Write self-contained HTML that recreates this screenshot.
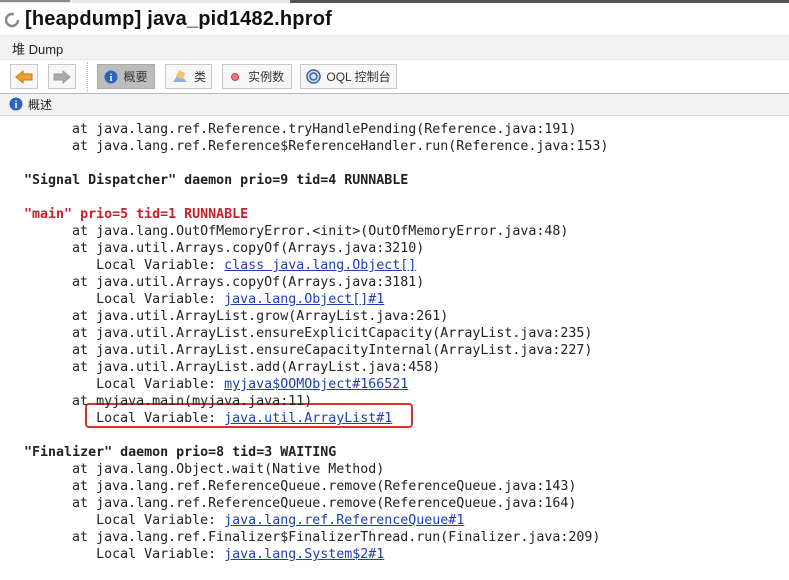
<!DOCTYPE html>
<html><head><meta charset="utf-8"><style>
*{margin:0;padding:0;box-sizing:border-box}
body{width:789px;height:580px;overflow:hidden;background:#fff;position:relative;font-family:"Liberation Sans","Noto Sans CJK SC",sans-serif;color:#222}
.abs{position:absolute}
.btn{position:absolute;top:64px;height:25px;border:1px solid #c8c8c8;background:#f7f7f7;font-size:12px;display:flex;align-items:center;justify-content:center;gap:5px;color:#333}
pre{position:absolute;left:0;top:121px;font-family:"DejaVu Sans Mono","Liberation Mono",monospace;font-size:13.3px;line-height:17px;color:#222}
a{color:#1f3fae;text-decoration:underline}
.r{color:#c8202a;font-weight:bold}
b{font-weight:bold}
</style></head><body>
<div class="abs" style="left:0;top:0;width:789px;height:3px;background:#e8e8e8"></div>
<div class="abs" style="left:290px;top:0;width:499px;height:3px;background:#555"></div>
<div class="abs" style="left:0;top:0;width:70px;height:2px;background:#888"></div>
<svg class="abs" style="left:4px;top:12px" width="16" height="16"><circle cx="8" cy="8" r="6" fill="none" stroke="#888" stroke-width="2.4" stroke-dasharray="30 8"/></svg>
<div class="abs" style="left:25px;top:8px;font-size:20px;font-weight:bold;color:#111;letter-spacing:0.2px">[heapdump] java_pid1482.hprof</div>
<div class="abs" style="left:0;top:35px;width:789px;height:25px;background:#f3f3f3;border-top:1px solid #e6e6e6;border-bottom:1px solid #e6e6e6"></div>
<div class="abs" style="left:12px;top:39px;font-size:13px;color:#222">堆 Dump</div>
<div class="btn" style="left:10px;width:28px"><svg width="18" height="14"><path d="M1 7 L8 1 V4 H17 V10 H8 V13 Z" fill="#f0a030" stroke="#c77a10"/></svg></div>
<div class="btn" style="left:48px;width:28px"><svg width="18" height="14"><path d="M17 7 L10 1 V4 H1 V10 H10 V13 Z" fill="#aaa" stroke="#999"/></svg></div>
<div class="abs" style="left:87px;top:62px;height:30px;border-left:1px dotted #bbb"></div>
<div class="btn" style="left:97px;width:58px;background:#bdbdbd;border-color:#aaa"><svg width="14" height="14"><circle cx="7" cy="7" r="6.5" fill="#2d63b8"/><text x="7" y="11" font-size="10" font-weight="bold" fill="#fff" text-anchor="middle" font-family="Liberation Serif">i</text></svg>概要</div>
<div class="btn" style="left:165px;width:47px"><svg width="18" height="14"><path d="M2 12 L8 3 L16 12 Z" fill="#8ab4e0"/><rect x="6" y="1" width="7" height="7" fill="#f5c16a" transform="rotate(30 9 5)"/></svg>类</div>
<div class="btn" style="left:222px;width:70px"><svg width="10" height="10"><circle cx="5" cy="5" r="3.5" fill="#e77" stroke="#c44"/></svg>&nbsp;实例数</div>
<div class="btn" style="left:300px;width:97px"><svg width="15" height="15"><circle cx="7.5" cy="7.5" r="6.5" fill="#cfe0f5" stroke="#3a5f95" stroke-width="1.5"/><circle cx="7.5" cy="7.5" r="3.5" fill="none" stroke="#3a5f95" stroke-width="1.5"/></svg>OQL 控制台</div>
<div class="abs" style="left:0;top:93px;width:789px;height:23px;background:#f2f2f2;border-top:1px solid #bbb;border-bottom:1px solid #d8d8d8"></div>
<svg class="abs" style="left:9px;top:97px" width="14" height="14"><circle cx="7" cy="7" r="6.5" fill="#2d63b8"/><text x="7" y="11" font-size="10" font-weight="bold" fill="#fff" text-anchor="middle" font-family="Liberation Serif">i</text></svg>
<div class="abs" style="left:28px;top:96px;font-size:12px">概述</div>
<div class="abs" style="left:85px;top:403px;width:328px;height:25px;border:2px solid #d9342b;border-radius:4px"></div>
<pre>         at java.lang.ref.Reference.tryHandlePending(Reference.java:191)
         at java.lang.ref.Reference$ReferenceHandler.run(Reference.java:153)

   <b>"Signal Dispatcher" daemon prio=9 tid=4 RUNNABLE</b>

   <span class="r">"main" prio=5 tid=1 RUNNABLE</span>
         at java.lang.OutOfMemoryError.&lt;init&gt;(OutOfMemoryError.java:48)
         at java.util.Arrays.copyOf(Arrays.java:3210)
            Local Variable: <a>class java.lang.Object[]</a>
         at java.util.Arrays.copyOf(Arrays.java:3181)
            Local Variable: <a>java.lang.Object[]#1</a>
         at java.util.ArrayList.grow(ArrayList.java:261)
         at java.util.ArrayList.ensureExplicitCapacity(ArrayList.java:235)
         at java.util.ArrayList.ensureCapacityInternal(ArrayList.java:227)
         at java.util.ArrayList.add(ArrayList.java:458)
            Local Variable: <a>myjava$OOMObject#166521</a>
         at myjava.main(myjava.java:11)
            Local Variable: <a>java.util.ArrayList#1</a>

   <b>"Finalizer" daemon prio=8 tid=3 WAITING</b>
         at java.lang.Object.wait(Native Method)
         at java.lang.ref.ReferenceQueue.remove(ReferenceQueue.java:143)
         at java.lang.ref.ReferenceQueue.remove(ReferenceQueue.java:164)
            Local Variable: <a>java.lang.ref.ReferenceQueue#1</a>
         at java.lang.ref.Finalizer$FinalizerThread.run(Finalizer.java:209)
            Local Variable: <a>java.lang.System$2#1</a>
</pre>
</body></html>
